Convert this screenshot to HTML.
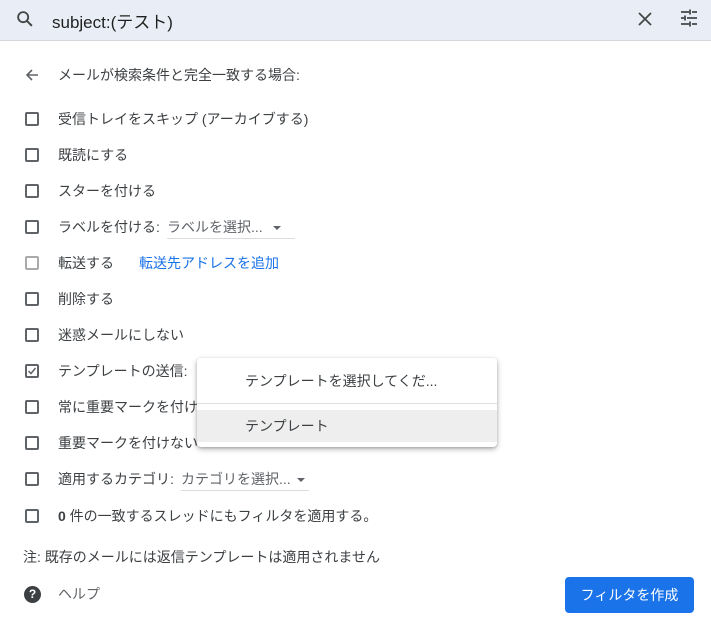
<!DOCTYPE html>
<html><head><meta charset="utf-8"><style>
*{margin:0;padding:0;box-sizing:border-box}
body{width:711px;height:627px;overflow:hidden;background:#fff;font-family:"Liberation Sans","Noto Sans CJK JP",sans-serif;color:#202124;position:relative;font-size:14px}
.hdr{position:absolute;left:0;top:0;width:711px;height:41px;background:#e9eef6;border-bottom:1px solid #d3d6da}
.abs{position:absolute;white-space:nowrap}
.row{position:absolute;left:0;height:20px;line-height:20px;white-space:nowrap}
.cb{position:absolute;left:25px;top:3px;width:14px;height:14px;border:2px solid #5f6368;border-radius:2px}
.t{position:absolute;left:58px;top:0;color:#3c4043}
.sel{position:absolute;border-bottom:1px solid #dadce0;color:#5f6368}
.arr{display:inline-block;width:0;height:0;border-left:4px solid transparent;border-right:4px solid transparent;border-top:4px solid #5f6368;vertical-align:middle;margin-left:10px}
.menu{position:absolute;left:197px;top:358px;width:300px;height:89px;background:#fff;border-radius:4px;box-shadow:0 2px 6px rgba(0,0,0,.3),0 1px 2px rgba(0,0,0,.15)}
</style></head><body>
<div class="hdr">
<svg class="abs" style="left:14px;top:8px" width="22" height="22" viewBox="0 0 24 24"><circle cx="10" cy="10" r="5.5" fill="none" stroke="#444746" stroke-width="2"/><path d="M14 14l5.5 5.5" stroke="#444746" stroke-width="2.2"/></svg>
<div class="abs" style="left:52px;top:8px;font-size:17px;color:#1f1f1f">subject:(テスト)</div>
<svg class="abs" style="left:635px;top:9px" width="20" height="20" viewBox="0 0 20 20"><path d="M4 4l12 12M16 4L4 16" stroke="#444746" stroke-width="1.8"/></svg>
<svg class="abs" style="left:679px;top:8px" width="20" height="20" viewBox="0 0 20 20"><path d="M2 4h8M13 4h5M2 10h3M8 10h10M2 16h8M13 16h5M11 1.5v5M6 7.5v5M11 13.5v5" stroke="#444746" stroke-width="1.8"/></svg>
</div>
<svg class="abs" style="left:24px;top:67px" width="16" height="16" viewBox="0 0 16 16"><path d="M14 8H3M8 3L3 8l5 5" fill="none" stroke="#5f6368" stroke-width="1.6"/></svg>
<div class="abs" style="left:58px;top:65px;line-height:20px;color:#3c4043">メールが検索条件と完全一致する場合:</div>

<div class="row" style="top:109px"><div class="cb"></div><div class="t">受信トレイをスキップ (アーカイブする)</div></div>
<div class="row" style="top:145px"><div class="cb"></div><div class="t">既読にする</div></div>
<div class="row" style="top:181px"><div class="cb"></div><div class="t">スターを付ける</div></div>
<div class="row" style="top:217px"><div class="cb"></div><div class="t">ラベルを付ける:</div><div class="sel" style="left:167px;width:128px;top:0;height:22px">ラベルを選択...<span class="arr"></span></div></div>
<div class="row" style="top:253px"><div class="cb" style="border-color:#aaa"></div><div class="t">転送する</div><div class="abs" style="left:139px;top:0;color:#1a73e8">転送先アドレスを追加</div></div>
<div class="row" style="top:289px"><div class="cb"></div><div class="t">削除する</div></div>
<div class="row" style="top:325px"><div class="cb"></div><div class="t">迷惑メールにしない</div></div>
<div class="row" style="top:361px"><div class="cb"><svg style="position:absolute;left:0;top:0" width="10" height="10" viewBox="0 0 10 10"><path d="M1.5 5l2.5 2.5L8.5 2" fill="none" stroke="#5f6368" stroke-width="1.5"/></svg></div><div class="t">テンプレートの送信:</div></div>
<div class="row" style="top:397px"><div class="cb"></div><div class="t">常に重要マークを付ける</div></div>
<div class="row" style="top:433px"><div class="cb"></div><div class="t">重要マークを付けない</div></div>
<div class="row" style="top:469px"><div class="cb"></div><div class="t">適用するカテゴリ:</div><div class="sel" style="left:181px;width:128px;top:0;height:22px">カテゴリを選択...<span class="arr" style="margin-left:6px"></span></div></div>
<div class="row" style="top:506px"><div class="cb"></div><div class="t"><b>0</b> 件の一致するスレッドにもフィルタを適用する。</div></div>

<div class="menu">
<div class="abs" style="left:48px;top:13px;color:#3c4043">テンプレートを選択してくだ...</div>
<div class="abs" style="left:0;top:45px;width:300px;height:1px;background:#e0e0e0"></div>
<div class="abs" style="left:0;top:52px;width:300px;height:32px;background:#eeeeee"></div>
<div class="abs" style="left:48px;top:58px;color:#3c4043">テンプレート</div>
</div>

<div class="abs" style="left:23px;top:547px;line-height:20px;color:#3c4043">注: 既存のメールには返信テンプレートは適用されません</div>
<div class="abs" style="left:24px;top:586px;width:17px;height:17px;border-radius:50%;background:#3c4043;color:#fff;font-size:12px;font-weight:bold;text-align:center;line-height:17px">?</div>
<div class="abs" style="left:58px;top:584px;line-height:20px;color:#5f6368">ヘルプ</div>
<div class="abs" style="left:565px;top:577px;width:129px;height:36px;background:#1a73e8;border-radius:4px;color:#fff;text-align:center;line-height:36px">フィルタを作成</div>
</body></html>
